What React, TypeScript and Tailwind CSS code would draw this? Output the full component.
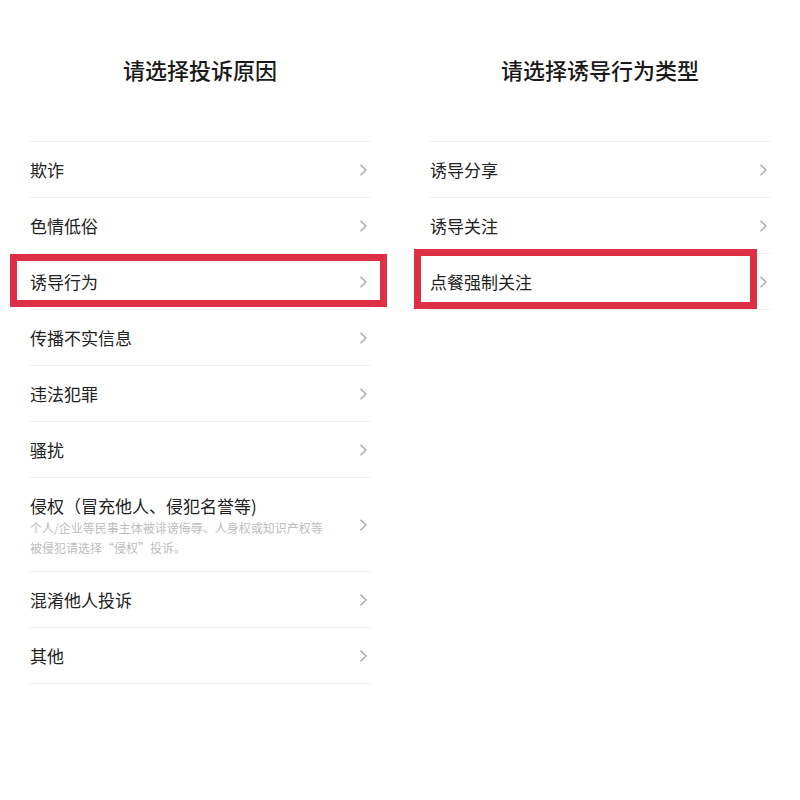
import React from 'react';

interface Reason {
  label: string;
  desc?: string[];
  marked?: boolean;
}

const reasons: Reason[] = [
  { label: '欺诈' },
  { label: '色情低俗' },
  { label: '诱导行为', marked: true },
  { label: '传播不实信息' },
  { label: '违法犯罪' },
  { label: '骚扰' },
  {
    label: '侵权（冒充他人、侵犯名誉等)',
    desc: ['个人/企业等民事主体被诽谤侮辱、人身权或知识产权等', '被侵犯请选择“侵权”投诉。'],
  },
  { label: '混淆他人投诉' },
  { label: '其他' },
];

const types: Reason[] = [
  { label: '诱导分享' },
  { label: '诱导关注' },
  { label: '点餐强制关注', marked: true },
];

function Chevron() {
  return (
    <svg width="9" height="14" viewBox="0 0 9 14" className="shrink-0">
      <path d="M1.5 1.8 L7 7 L1.5 12.2" fill="none" stroke="#a8a8a8" strokeWidth="1.4" />
    </svg>
  );
}

function Row({ item, boxClass }: { item: Reason; boxClass: string }) {
  return (
    <div className="relative flex min-h-[56px] items-center justify-between border-b border-[#ececec] pr-[2px]">
      {item.desc ? (
        <div className="pt-[16px] pb-[13px]">
          <div className="text-[17px] leading-[24px] text-[#222]">{item.label}</div>
          <div className="text-[12px] leading-[20px] text-[#bdbdbd]">
            {item.desc.map((d) => (
              <div key={d}>{d}</div>
            ))}
          </div>
        </div>
      ) : (
        <div className="text-[17px] leading-[24px] text-[#222]">{item.label}</div>
      )}
      <Chevron />
      {item.marked && <div className={`absolute border-[7px] border-[#dd2f46] ${boxClass}`} />}
    </div>
  );
}

function Panel({ title, items, boxClass }: { title: string; items: Reason[]; boxClass: string }) {
  return (
    <div className="flex flex-col">
      <div className="h-[141px] pt-[53px] text-center text-[22px] font-medium leading-[32px] text-[#1a1a1a]">
        {title}
      </div>
      <div className="mx-[30px] border-t border-[#ececec]">
        {items.map((item) => (
          <Row key={item.label} item={item} boxClass={boxClass} />
        ))}
      </div>
    </div>
  );
}

export default function App() {
  return (
    <div
      className="grid h-[800px] w-[800px] grid-cols-2 bg-white"
      style={{ fontFamily: '"Noto Sans CJK SC", "Noto Sans", sans-serif' }}
    >
      <Panel title="请选择投诉原因" items={reasons} boxClass="left-[-20px] right-[-17px] top-[0px] bottom-[2px]" />
      <Panel title="请选择诱导行为类型" items={types} boxClass="left-[-16px] right-[13px] top-[-5px] bottom-[0px]" />
    </div>
  );
}
